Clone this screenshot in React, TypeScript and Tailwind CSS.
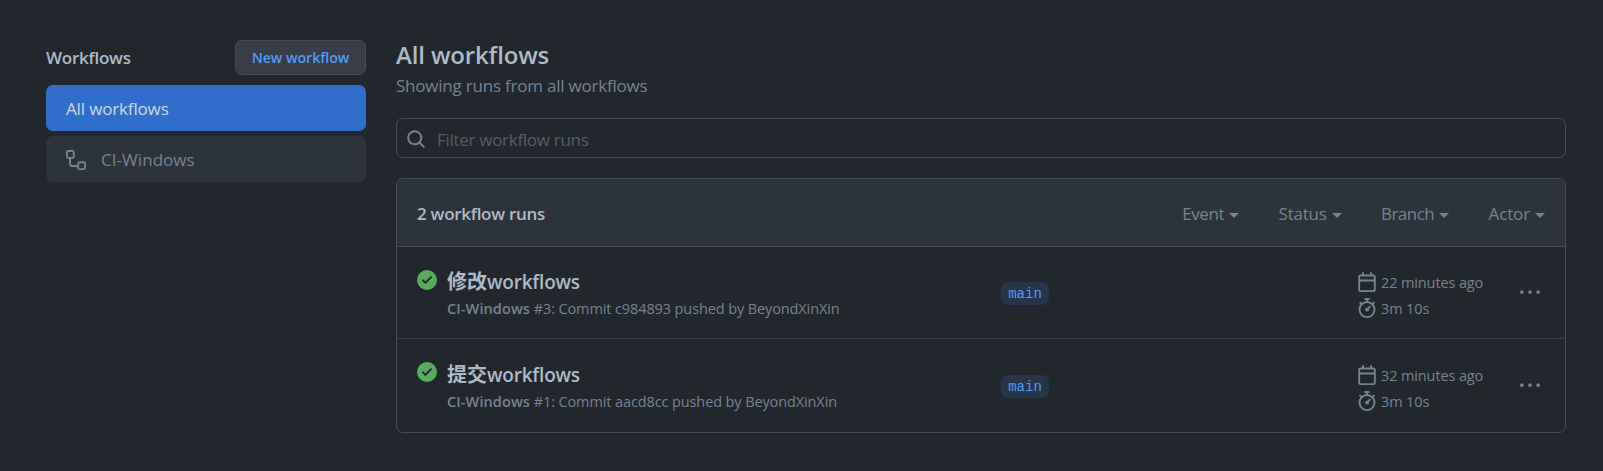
import type { ReactNode } from "react";

const filters = [
  { name: "Event", tracking: "tracking-[-0.4px]" },
  { name: "Status", tracking: "tracking-[-0.25px]" },
  { name: "Branch", tracking: "tracking-[-0.55px]" },
  { name: "Actor", tracking: "tracking-[-0.15px]" },
];

const runs = [
  { id: 3, title: "修改", commit: "c984893", age: "22 minutes ago" },
  { id: 1, title: "提交", commit: "aacd8cc", age: "32 minutes ago" },
];

function Icon({ size = 20, className = "", children }: { size?: number; className?: string; children: ReactNode }) {
  return (
    <svg width={size} height={size} viewBox="0 0 16 16" fill="currentColor" fillRule="evenodd" className={`shrink-0 ${className}`}>
      {children}
    </svg>
  );
}

function Run({ id, title, commit, age }: (typeof runs)[number]) {
  return (
    <li className="group flex h-[92px] items-start border-t border-[#373e47] pl-5 first:border-[#444c56]">
      <Icon className="mt-[23px] text-[#57ab5a]">
        <path d="M8 16A8 8 0 108 0a8 8 0 000 16zm3.78-9.72a.75.75 0 00-1.06-1.06L6.75 9.19 5.28 7.72a.75.75 0 00-1.06 1.06l2 2a.75.75 0 001.06 0l4.5-4.5z" />
      </Icon>
      <div className="flex grow items-start group-last:pt-px">
        <div className="ml-[10px] w-[554px] pt-5">
          <h3 className="h-[29px] text-[20px] leading-[29px] font-bold text-[#adbac7]">
            {title}
            <span className="text-[19px] font-semibold tracking-[-0.2px]">workflows</span>
          </h3>
          <p className="h-[26px] text-[14.5px] leading-[26px] tracking-[-0.11px]">
            <b className="font-semibold tracking-[0.1px]">CI-Windows</b> #{id}: Commit {commit} pushed by BeyondXinXin
          </p>
        </div>
        <span className="mt-[35px] h-[23px] w-12 rounded-[7px] bg-[#263549] text-center font-['Liberation_Mono',monospace] text-[14px] leading-[25px] text-[#539bf5]">
          main
        </span>
        <div className="ml-[308px] flex w-[163px] flex-col pt-[22px] text-[14.5px] leading-[26px] tracking-[-0.12px]">
          <div className="flex h-[26px] items-center gap-[4px]">
            <Icon>
              <path d="M4.75 0a.75.75 0 01.75.75V2h5V.75a.75.75 0 011.5 0V2h1.25c.966 0 1.75.784 1.75 1.75v10.5A1.75 1.75 0 0113.25 16H2.75A1.75 1.75 0 011 14.25V3.75C1 2.784 1.784 2 2.75 2H4V.75A.75.75 0 014.75 0zm0 3.5h-2a.25.25 0 00-.25.25V6h11V3.75a.25.25 0 00-.25-.25h-8.5zm-2.25 4v6.75c0 .138.112.25.25.25h10.5a.25.25 0 00.25-.25V7.5h-11z" />
            </Icon>
            <span className="pt-px">{age}</span>
          </div>
          <div className="flex h-[26px] items-center gap-[4px]">
            <Icon>
              <path d="M5.75.75A.75.75 0 016.5 0h3a.75.75 0 010 1.5h-.75v1l-.001.041a6.718 6.718 0 013.464 1.435l.007-.006.75-.75a.75.75 0 111.06 1.06l-.75.75-.006.007a6.75 6.75 0 11-10.548 0L2.72 5.03l-.75-.75a.75.75 0 011.06-1.06l.75.75.007.006A6.718 6.718 0 017.25 2.541V1.5H6.5a.75.75 0 01-.75-.75zM8 14.5A5.25 5.25 0 108 4a5.25 5.25 0 000 10.5zm.389-6.7l1.33-1.33a.75.75 0 111.061 1.06L9.45 8.861A1.502 1.502 0 018 10.75a1.5 1.5 0 11.389-2.95z" />
            </Icon>
            <span className="pt-px">3m 10s</span>
          </div>
        </div>
        <button className="mt-[35px]" aria-label="Run options">
          <Icon>
            <circle cx="1.5" cy="8" r="1.5" />
            <circle cx="8" cy="8" r="1.5" />
            <circle cx="14.5" cy="8" r="1.5" />
          </Icon>
        </button>
      </div>
    </li>
  );
}

export default function App() {
  return (
    <div className="flex h-[471px] bg-[#22272e] pl-[46px] font-['Open_Sans','Noto_Sans_CJK_SC',sans-serif] text-[17px] text-[#768390]">
      <aside className="w-80 pt-10">
        <div className="flex h-[35px] items-center justify-between">
          <h2 className="font-semibold tracking-[-0.25px] text-[#adbac7]">Workflows</h2>
          <button className="flex h-[35px] w-[131px] items-center justify-center rounded-[7px] border border-[#444c56] bg-[#373e47] text-[14.2px] font-semibold tracking-[-0.05px] text-[#539bf5]">
            New workflow
          </button>
        </div>
        <nav className="mt-[10px] flex flex-col gap-[5px]">
          <a className="flex h-[46px] items-center rounded-[7px] bg-[#316dca] px-5 pt-px tracking-[-0.15px] text-[#cdd9e5]">All workflows</a>
          <a className="flex h-[46px] items-center gap-[15px] rounded-[7px] bg-[#2d333b] px-5">
            <Icon className="mt-px">
              <path d="M0 1.75C0 .784.784 0 1.75 0h3.5C6.216 0 7 .784 7 1.75v3.5A1.75 1.75 0 015.25 7H4v4a1 1 0 001 1h4v-1.25C9 9.784 9.784 9 10.75 9h3.5c.966 0 1.75.784 1.75 1.75v3.5A1.75 1.75 0 0114.25 16h-3.5A1.75 1.75 0 019 14.25v-.75H5A2.5 2.5 0 012.5 11V7h-.75A1.75 1.75 0 010 5.25v-3.5zm1.75-.25a.25.25 0 00-.25.25v3.5c0 .138.112.25.25.25h3.5a.25.25 0 00.25-.25v-3.5a.25.25 0 00-.25-.25h-3.5zm9 9a.25.25 0 00-.25.25v3.5c0 .138.112.25.25.25h3.5a.25.25 0 00.25-.25v-3.5a.25.25 0 00-.25-.25h-3.5z" />
            </Icon>
            <span className="pt-px tracking-[0.05px]">CI-Windows</span>
          </a>
        </nav>
      </aside>
      <main className="ml-[30px] w-[1170px] pt-[38px]">
        <h1 className="h-[34px] text-[24px] leading-[34px] font-semibold tracking-[-0.15px] text-[#adbac7]">All workflows</h1>
        <p className="h-[28px] leading-[28px] tracking-[-0.22px]">Showing runs from all workflows</p>
        <div className="mt-[18px] flex h-10 items-center gap-[11px] rounded-[7px] border border-[#444c56] pl-[9px] text-[#545d68]">
          <Icon className="mt-[2px] text-[#768390]">
            <path d="M11.5 7a4.499 4.499 0 11-8.998 0A4.499 4.499 0 0111.5 7zm-.82 4.74a6 6 0 111.06-1.06l3.04 3.04a.75.75 0 11-1.06 1.06l-3.04-3.04z" />
          </Icon>
          <span className="pt-[3px] tracking-[-0.29px]">Filter workflow runs</span>
        </div>
        <section className="mt-5 h-[255px] overflow-hidden rounded-[7px] border border-[#444c56]">
          <header className="flex h-[67px] items-center bg-[#2d333b] px-5 pt-[3px]">
            <h2 className="mr-auto font-semibold tracking-[-0.28px] text-[#adbac7]">2 workflow runs</h2>
            <div className="flex gap-[39.5px]">
              {filters.map(({ name, tracking }) => (
                <button key={name} className="flex items-center gap-[5px]">
                  <span className={tracking}>{name}</span>
                  <i className="mt-[2px] border-x-5 border-t-5 border-x-transparent border-t-current" />
                </button>
              ))}
            </div>
          </header>
          <ul>
            {runs.map((run) => (
              <Run key={run.id} {...run} />
            ))}
          </ul>
        </section>
      </main>
    </div>
  );
}
